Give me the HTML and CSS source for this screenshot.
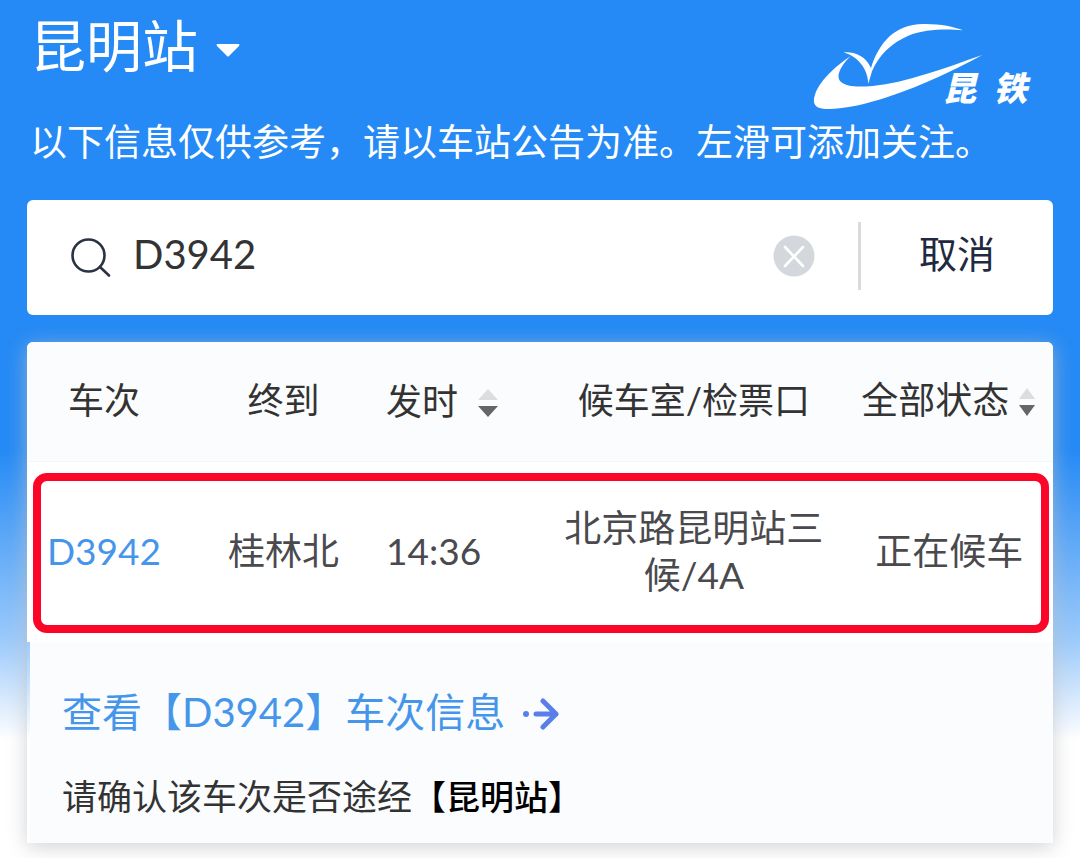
FILE: index.html
```html
<!DOCTYPE html>
<html lang="zh-CN">
<head>
  <meta charset="UTF-8">
  <meta name="viewport" content="width=device-width, initial-scale=1.0">
  <title>昆明站</title>
  <link rel="stylesheet" href="styles.css">
</head>
<body>
  <header class="header">
    <div class="station">
      <select class="station-select" aria-label="车站">
        <option>昆明站</option>
      </select>
      <svg class="caret" viewBox="0 0 24 13" aria-hidden="true"><path d="M1 0H23Q24 1 23 2L13 12Q12 13 11 12L1 2Q0 1 1 0Z" fill="#fff"/></svg>
    </div>
    <svg class="logo" viewBox="40 36 660 264" role="img" aria-label="昆铁">
      <g fill="#fff">
        <path d="M131 127C168 124 198 139 214 174C238 98 285 43 370 42C420 41 462 50 490 61C443 56 375 57 326 77C276 98 236 137 217 184L206 221C204 178 177 140 131 127Z"/>
        <path d="M153 138C122 169 108 198 122 214C140 232 177 231 219 228C320 218 430 176 548 135C468 178 370 226 266 260C190 285 120 300 70 296C43 293 38 277 46 254C58 215 107 168 153 138Z"/>
        <text class="logo-text" x="428" y="272">昆</text>
        <text class="logo-text" x="580" y="272">铁</text>
      </g>
    </svg>
  </header>
  <p class="notice">以下信息仅供参考，请以车站公告为准。左滑可添加关注。</p>

  <main>
    <form class="search">
      <svg class="search-icon" viewBox="0 0 40 40" aria-hidden="true"><g fill="none" stroke="#2b3245" stroke-width="2.6" stroke-linecap="round"><circle cx="17.500" cy="17.500" r="16"/><path d="M29 29L38 37.500"/></g></svg>
      <input class="search-input" type="text" value="D3942" aria-label="车次">
      <button class="clear" type="reset" aria-label="清除">
        <svg viewBox="0 0 42 42"><circle cx="21" cy="21" r="20.500" fill="#d4d8dc"/><path d="M12 12L30 31M30 12L12 31" stroke="#fff" stroke-width="2.6" stroke-linecap="round"/></svg>
      </button>
      <button class="cancel" type="button">取消</button>
    </form>

    <section class="card">
      <table class="trains">
        <thead>
          <tr>
            <th class="col-train">车次</th>
            <th class="col-dest">终到</th>
            <th class="col-time">
              <button class="sort" type="button">发时
                <svg class="sort-icon" viewBox="0 0 20 28"><path d="M10 0L20 11H0Z" fill="#ddd"/><path d="M0 17H20L10 28Z" fill="#666"/></svg>
              </button>
            </th>
            <th class="col-room">候车室/检票口</th>
            <th class="col-status">
              <button class="sort sort-tight" type="button">全部状态
                <svg class="sort-icon" viewBox="0 0 20 28"><path d="M10 0L18 11H2Z" fill="#ddd"/><path d="M2 17H18L10 28Z" fill="#666"/></svg>
              </button>
            </th>
          </tr>
        </thead>
        <tbody>
          <tr class="highlight">
            <td class="train-no">D3942</td>
            <td>桂林北</td>
            <td class="col-time">14:36</td>
            <td class="col-room">北京路昆明站三候/4A</td>
            <td class="col-status">正在候车</td>
          </tr>
        </tbody>
      </table>
      <div class="detail">
        <a class="detail-link" href="#">查看【D3942】车次信息
          <svg class="arrow" viewBox="0 0 36 32" aria-hidden="true"><circle cx="3" cy="16" r="3" fill="#5b7fe8"/><path d="M13 16H33M20 3L33 16L20 29" fill="none" stroke="#5b7fe8" stroke-width="5" stroke-linecap="round" stroke-linejoin="round"/></svg>
        </a>
        <p class="confirm">请确认该车次是否途经<strong>【昆明站】</strong></p>
      </div>
    </section>
  </main>
</body>
</html>
```

FILE: styles.css
```css
* {
  box-sizing: border-box;
}
body {
  margin: 0;
  min-height: 100vh;
  font-family: Lato, "Noto Sans CJK SC", sans-serif;
  font-size: 37px;
  color: #333;
  background: #fff linear-gradient(#258af5 0, #258af5 450px, #9ccafb 640px, #fff 740px) no-repeat;
}
button, input, select {
  font: inherit;
  color: inherit;
  background: none;
  border: none;
  padding: 0;
  margin: 0;
}
button {
  cursor: pointer;
}
svg {
  display: block;
  flex: none;
}
.header {
  display: flex;
  justify-content: space-between;
  align-items: flex-start;
  padding: 0 47px 0 30px;
}
.station {
  display: flex;
  align-items: center;
  gap: 18px;
  color: #fff;
}
.station-select {
  appearance: none;
  height: 92px;
  font-size: 56px;
  line-height: 92px;
}
.caret {
  width: 24px;
  height: 13px;
  margin-top: 8px;
}
.logo {
  width: 220px;
  height: 88px;
  margin-top: 22px;
}
.logo-text {
  font-size: 102px;
  font-weight: 900;
  font-style: italic;
}
.notice {
  margin: 4px 0 30px;
  padding: 0 30px;
  line-height: 56px;
  color: #fff;
}
main {
  padding: 0 27px;
}
.search {
  display: flex;
  align-items: center;
  height: 115px;
  margin-bottom: 27px;
  padding: 0 0 4px 44px;
  background: #fff;
  border-radius: 6px;
}
.search-icon {
  width: 40px;
  height: 40px;
  margin-top: 4px;
}
.search-input {
  flex: 1;
  min-width: 0;
  height: 64px;
  margin: 0 24px 4px 22px;
  font-size: 40px;
  outline: none;
}
.clear svg {
  width: 42px;
  height: 42px;
}
.cancel {
  width: 195px;
  height: 68px;
  margin-left: 43px;
  padding-bottom: 8px;
  border-left: 3px solid #d9dadd;
  font-size: 38px;
  color: #1f2a40;
}
.card {
  margin-bottom: 15px;
  border-radius: 6px 6px 0 0;
  box-shadow: 0 4px 20px rgba(190, 192, 196, 0.7);
}
.trains {
  width: 100%;
  table-layout: fixed;
  border-collapse: collapse;
  text-align: center;
  background: #fff;
  border-radius: 6px 6px 0 0;
}
.trains th {
  height: 119px;
  padding: 0 0 6px;
  font-size: 36px;
  font-weight: 400;
  background: #fbfcfe;
  border-bottom: 1px solid #f4f6f8;
}
.trains th:first-child {
  border-top-left-radius: 6px;
}
.trains th:last-child {
  border-top-right-radius: 6px;
}
.trains td {
  height: 181px;
  padding: 0 0 2px;
  line-height: 47px;
  color: #4a4a4e;
}
.trains .col-train {
  width: 15%;
}
.trains .col-dest {
  width: 20%;
}
.trains .col-time {
  width: 16%;
  text-align: left;
}
.trains .col-room {
  width: 28%;
  padding-left: 12px;
  padding-right: 12px;
}
.trains .col-status {
  padding-left: 8px;
}
.trains .train-no {
  color: #4596ea;
}
.sort {
  display: inline-flex;
  align-items: center;
  gap: 20px;
  white-space: nowrap;
  vertical-align: middle;
}
.sort-tight {
  gap: 8px;
  font-size: 37px;
}
.sort-icon {
  width: 20px;
  height: 28px;
  margin-top: 8px;
}
/* red frame around the row, drawn from its last cell */
.highlight {
  position: relative;
}
.highlight td:last-child::after {
  content: "";
  position: absolute;
  inset: 12px 4px 9px 6px;
  border: 8px solid #fb0529;
  border-radius: 14px;
  pointer-events: none;
}
.detail {
  margin-left: 3px;
  padding: 42px 32px 18px;
  background: #fbfcfe;
}
.detail-link {
  display: flex;
  align-items: center;
  gap: 18px;
  font-size: 40px;
  line-height: 56px;
  color: #4596ea;
  text-decoration: none;
}
.arrow {
  width: 36px;
  height: 32px;
  margin-top: 4px;
}
.confirm {
  margin: 28px 0 0;
  font-size: 35px;
  line-height: 56px;
}
.confirm strong {
  font-size: 34px;
  font-weight: 500;
  color: #000;
}
```
